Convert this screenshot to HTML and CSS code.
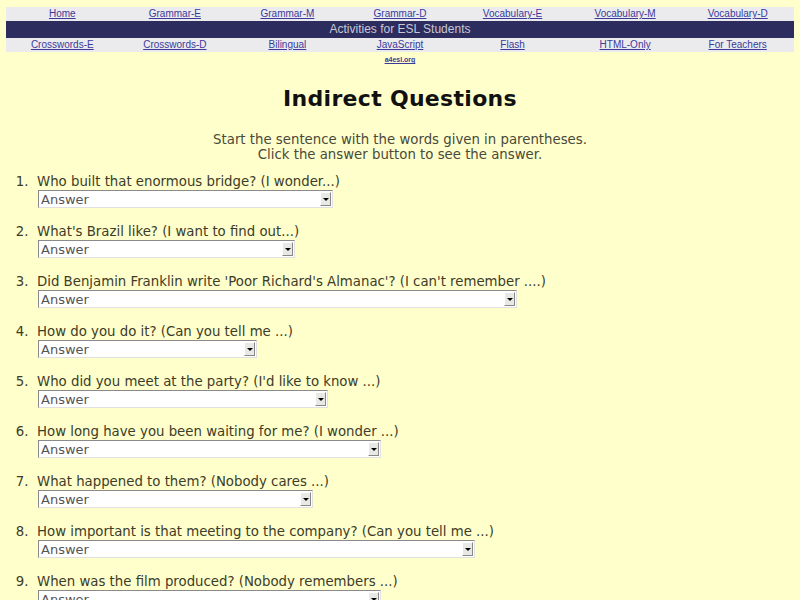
FILE: index.html
```html
<!DOCTYPE html>
<html>
<head>
<meta charset="utf-8">
<title>Indirect Questions</title>
<link rel="stylesheet" href="styles.css">
</head>
<body>
<div class="nav">
  <div class="navrow">
    <a href="#">Home</a><a href="#">Grammar-E</a><a href="#">Grammar-M</a><a href="#">Grammar-D</a><a href="#">Vocabulary-E</a><a href="#">Vocabulary-M</a><a href="#">Vocabulary-D</a>
  </div>
  <div class="band">Activities for ESL Students</div>
  <div class="navrow">
    <a href="#">Crosswords-E</a><a href="#">Crosswords-D</a><a href="#">Bilingual</a><a href="#">JavaScript</a><a href="#">Flash</a><a href="#">HTML-Only</a><a href="#">For Teachers</a>
  </div>
  <div class="site"><a href="#">a4esl.org</a></div>
</div>

<h1 class="title">Indirect Questions</h1>
<p class="intro">Start the sentence with the words given in parentheses.<br>Click the answer button to see the answer.</p>

<ol class="questions">
  <li><div class="q">Who built that enormous bridge? (I wonder...)</div><div class="sel" style="width:295px"><span>Answer</span><i class="arr"></i></div></li>
  <li><div class="q">What's Brazil like? (I want to find out...)</div><div class="sel" style="width:257px"><span>Answer</span><i class="arr"></i></div></li>
  <li><div class="q">Did Benjamin Franklin write 'Poor Richard's Almanac'? (I can't remember ....)</div><div class="sel" style="width:479px"><span>Answer</span><i class="arr"></i></div></li>
  <li><div class="q">How do you do it? (Can you tell me ...)</div><div class="sel" style="width:219px"><span>Answer</span><i class="arr"></i></div></li>
  <li><div class="q">Who did you meet at the party? (I'd like to know ...)</div><div class="sel" style="width:290px"><span>Answer</span><i class="arr"></i></div></li>
  <li><div class="q">How long have you been waiting for me? (I wonder ...)</div><div class="sel" style="width:343px"><span>Answer</span><i class="arr"></i></div></li>
  <li><div class="q">What happened to them? (Nobody cares ...)</div><div class="sel" style="width:275px"><span>Answer</span><i class="arr"></i></div></li>
  <li><div class="q">How important is that meeting to the company? (Can you tell me ...)</div><div class="sel" style="width:437px"><span>Answer</span><i class="arr"></i></div></li>
  <li><div class="q">When was the film produced? (Nobody remembers ...)</div><div class="sel" style="width:343px"><span>Answer</span><i class="arr"></i></div></li>
</ol>
</body>
</html>
```

FILE: styles.css
```css
html, body {
  margin: 0;
  padding: 0;
  background: #ffffcc;
}
body {
  font-family: "DejaVu Sans", Verdana, sans-serif;
  color: #3c3c28;
}
.nav {
  padding: 7px 6px 0 6px;
  font-family: "Liberation Sans", Arial, sans-serif;
}
.navrow {
  display: grid;
  grid-template-columns: repeat(7, 1fr);
  background: #ebebee;
  height: 14px;
  align-items: center;
}
.navrow a {
  text-align: center;
  font-size: 10px;
  line-height: 14px;
  color: #3a3a9a;
  text-decoration: underline;
}
.band {
  background: #2c2c5e;
  color: #c8c8d4;
  font-size: 12px;
  height: 17px;
  line-height: 16px;
  text-align: center;
}
.site {
  text-align: center;
  height: 12px;
  line-height: 10px;
}
.site a {
  font-size: 7px;
  font-weight: bold;
  color: #3a3a9a;
}
.title {
  font-family: "DejaVu Sans", sans-serif;
  font-size: 22px;
  font-weight: bold;
  color: #111;
  text-align: center;
  margin: 18px 0 0 0;
  line-height: 34px;
  letter-spacing: 0.3px;
}
.intro {
  text-align: center;
  font-size: 13.3px;
  line-height: 15px;
  margin: 16px 0 0 0;
  color: #4a4a3a;
}
.questions {
  margin: 12px 0 0 0;
  padding: 0 0 0 37px;
  font-size: 13.3px;
}
.questions li {
  margin-bottom: 16px;
  padding-left: 0;
}
.questions li::marker {
  content: counter(list-item) ".\00a0\00a0";
  color: #3c3c28;
}
.q {
  line-height: 16px;
  height: 16px;
  white-space: nowrap;
}
.sel {
  box-sizing: border-box;
  margin-left: 1px;
  height: 18px;
  background: #fff;
  border-top: 1px solid #8a8a8a;
  border-left: 1px solid #8a8a8a;
  border-bottom: 1px solid #e0e0e0;
  border-right: 1px solid #e0e0e0;
  display: flex;
  align-items: center;
  justify-content: space-between;
  font-family: "DejaVu Sans", sans-serif;
  font-size: 13px;
  color: #555;
}
.sel span {
  padding-left: 2px;
}
.arr {
  width: 11px;
  height: 14px;
  margin-right: 1px;
  background: #e8e8e4;
  border-right: 1px solid #888;
  border-bottom: 1px solid #888;
  border-top: 1px solid #fff;
  border-left: 1px solid #fff;
  box-sizing: border-box;
  position: relative;
}
.arr::after {
  content: "";
  position: absolute;
  left: 2px;
  top: 5px;
  border-left: 3px solid transparent;
  border-right: 3px solid transparent;
  border-top: 3px solid #000;
}
```
